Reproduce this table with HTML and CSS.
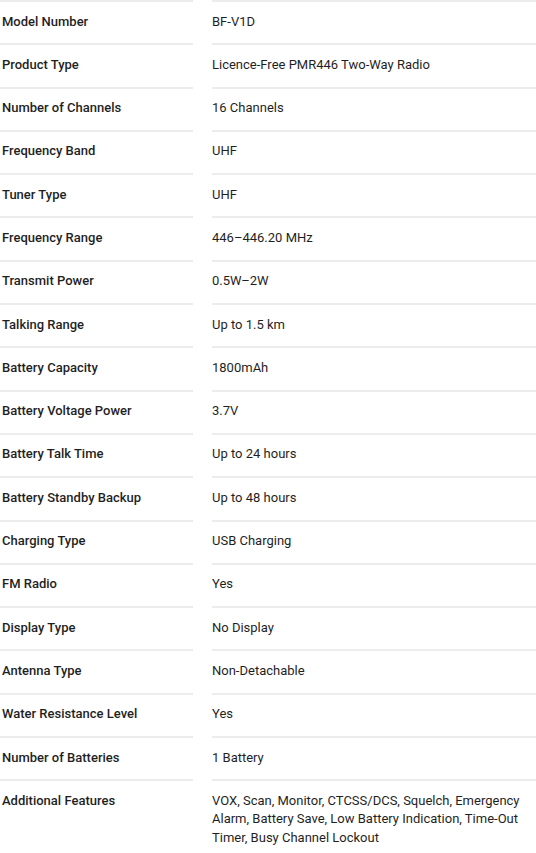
FILE: index.html
```html
<!DOCTYPE html>
<html>
<head>
    <title>Specifications</title>
    <link rel="stylesheet" href="styles.css">
</head>
<body>
    <div class="specs">
        <div class="label">Model Number</div><div class="value">BF-V1D</div>
        <div class="label">Product Type</div><div class="value">Licence-Free PMR446 Two-Way Radio</div>
        <div class="label">Number of Channels</div><div class="value">16 Channels</div>
        <div class="label">Frequency Band</div><div class="value">UHF</div>
        <div class="label">Tuner Type</div><div class="value">UHF</div>
        <div class="label">Frequency Range</div><div class="value">446–446.20 MHz</div>
        <div class="label">Transmit Power</div><div class="value">0.5W–2W</div>
        <div class="label">Talking Range</div><div class="value">Up to 1.5 km</div>
        <div class="label">Battery Capacity</div><div class="value">1800mAh</div>
        <div class="label">Battery Voltage Power</div><div class="value">3.7V</div>
        <div class="label">Battery Talk Time</div><div class="value">Up to 24 hours</div>
        <div class="label">Battery Standby Backup</div><div class="value">Up to 48 hours</div>
        <div class="label">Charging Type</div><div class="value">USB Charging</div>
        <div class="label">FM Radio</div><div class="value">Yes</div>
        <div class="label">Display Type</div><div class="value">No Display</div>
        <div class="label">Antenna Type</div><div class="value">Non-Detachable</div>
        <div class="label">Water Resistance Level</div><div class="value">Yes</div>
        <div class="label">Number of Batteries</div><div class="value">1 Battery</div>
        <div class="label">Additional Features</div><div class="value wrap">VOX, Scan, Monitor, CTCSS/DCS, Squelch, Emergency Alarm, Battery Save, Low Battery Indication, Time-Out Timer, Busy Channel Lockout</div>
    </div>
</body>
</html>
```
FILE: styles.css
```css
body {
    font-family: Roboto, "Noto Sans", sans-serif;
    background-color: #fff;
    color: #1f1f1f;
    margin: 0;
    padding: 0;
}
.specs {
    display: grid;
    grid-template-columns: 193px 1fr;
    column-gap: 19px;
}
.label,
.value {
    font-size: 13px;
    line-height: 18.5px;
    padding: 10.5px 0 12.3px;
    border-top: 2px solid #ececec;
}
.label {
    font-weight: 500;
    padding-left: 2px;
}
.value {
    font-weight: 400;
}
.wrap {
    padding-right: 14px;
}
```
